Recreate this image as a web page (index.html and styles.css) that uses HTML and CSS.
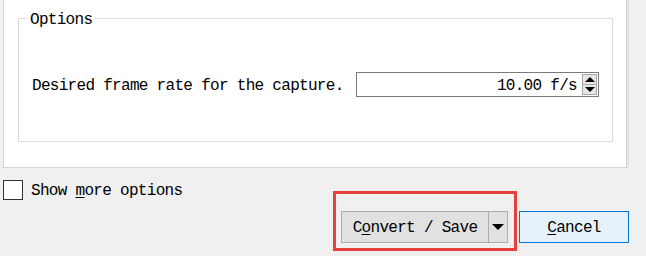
FILE: index.html
```html
<!DOCTYPE html>
<html>
<head>
<meta charset="utf-8">
<link rel="stylesheet" href="styles.css">
</head>
<body>
<div class="window">
  <div class="panel">
    <fieldset class="group">
      <legend class="group-title">Options</legend>
      <div class="row">
        <span class="label">Desired frame rate for the capture.</span>
        <div class="spin">
          <span class="spin-value">10.00 f/s</span>
          <div class="spin-btns">
            <span class="spin-btn spin-up"><span class="tri-up"></span></span>
            <span class="spin-btn spin-down"><span class="tri-down"></span></span>
          </div>
        </div>
      </div>
    </fieldset>
  </div>
  <label class="check"><span class="box"></span><span class="check-text">Show <u>m</u>ore options</span></label>
  <div class="actions">
    <div class="split">
      <span class="split-main">C<u>o</u>nvert / Save</span>
      <span class="split-arrow"><span class="tri-down big"></span></span>
    </div>
    <div class="btn cancel"><u>C</u>ancel</div>
  </div>
  <div class="highlight"></div>
</div>
</body>
</html>
```
FILE: styles.css
```css
* { box-sizing: border-box; }
html, body { margin: 0; padding: 0; }
body {
  background: #f0f0f0;
  font-family: "Liberation Mono", "DejaVu Sans Mono", monospace;
  font-size: 16px;
  letter-spacing: -0.7px;
  color: #000;
  width: 646px;
  height: 256px;
  overflow: hidden;
}
u { text-decoration: underline; text-underline-offset: 2px; }
.window { position: relative; width: 646px; height: 256px; }

.panel {
  margin-left: 3px;
  width: 624px;
  height: 168px;
  background: #fff;
  border-left: 1px solid #d4d4d4;
  border-right: 1px solid #d4d4d4;
  border-bottom: 1px solid #d4d4d4;
  box-shadow: 2px 0 0 #e4e4e4;
  padding: 9px 13px 0 14px;
}
.group {
  margin: 0;
  padding: 0 13px;
  height: 133px;
  border: 1px solid #dcdcdc;
  min-width: 0;
}
.group-title {
  padding: 2px 3px 0;
  margin-left: -5px;
  line-height: 18px;
  height: 18px;
}
.row {
  margin-top: 45px;
  display: flex;
  align-items: center;
  justify-content: space-between;
}
.label { line-height: 18px; padding-top: 3px; }
.spin {
  width: 243px;
  height: 25px;
  border: 1px solid #7a7a7a;
  display: flex;
  align-items: center;
  justify-content: flex-end;
  padding-right: 1px;
}
.spin-value { margin-right: 5px; line-height: 18px; padding-top: 3px; }
.spin-btns {
  width: 15px;
  height: 21px;
  display: flex;
  flex-direction: column;
}
.spin-btn {
  flex: 1;
  background: #e6e6e6;
  border: 1px solid #a8a8a8;
  display: flex;
  align-items: center;
  justify-content: center;
}
.spin-up { border-bottom: none; }
.tri-up {
  width: 0; height: 0;
  border-left: 5px solid transparent;
  border-right: 5px solid transparent;
  border-bottom: 5px solid #000;
}
.tri-down {
  width: 0; height: 0;
  border-left: 5px solid transparent;
  border-right: 5px solid transparent;
  border-top: 5px solid #000;
}
.tri-down.big {
  border-left-width: 6px;
  border-right-width: 6px;
  border-top-width: 6px;
}

.check {
  display: flex;
  align-items: center;
  margin: 12px 0 0 3px;
  height: 20px;
}
.box {
  width: 20px;
  height: 20px;
  border: 1px solid #333;
  background: #fff;
  margin-right: 8px;
}
.check-text { line-height: 18px; padding-top: 2px; }

.actions {
  display: flex;
  justify-content: flex-end;
  gap: 11px;
  margin-top: 11px;
  padding-right: 17px;
}
.split {
  width: 167px;
  height: 32px;
  background: #e1e1e1;
  border: 1px solid #adadad;
  display: flex;
}
.split-main {
  flex: 1;
  display: flex;
  align-items: center;
  justify-content: center;
  border-right: 1px solid #adadad;
  padding-top: 2px;
}
.split-arrow {
  width: 18px;
  display: flex;
  align-items: center;
  justify-content: center;
}
.btn {
  height: 32px;
  display: flex;
  align-items: center;
  justify-content: center;
  padding-top: 2px;
}
.cancel {
  width: 110px;
  background: #e5f1fb;
  border: 1px solid #0078d7;
}

.highlight {
  position: absolute;
  left: 333px;
  top: 191px;
  width: 184px;
  height: 60px;
  border: 3px solid #e8403c;
}
```
